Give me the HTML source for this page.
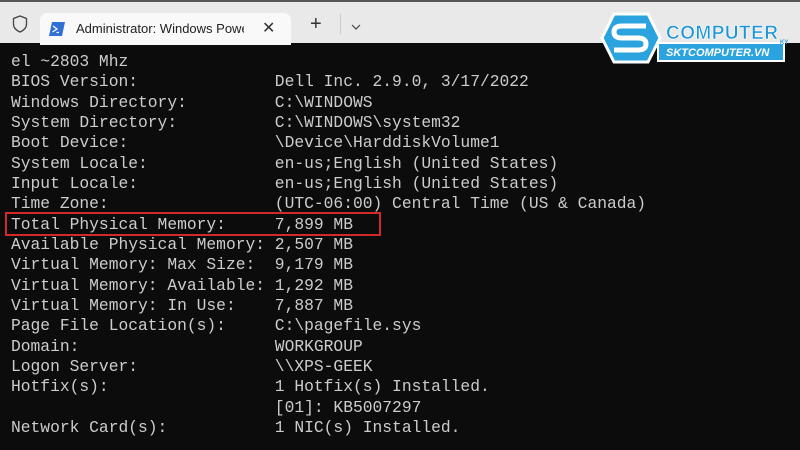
<!DOCTYPE html>
<html><head><style>
body{margin:0;width:800px;height:450px;overflow:hidden;background:#0c0c0c;position:relative;font-family:"Liberation Sans",sans-serif}
#bar{position:absolute;left:0;top:0;width:800px;height:43px;background:#e9e9e9;border-top:2px solid #555;box-sizing:border-box}
#tab{position:absolute;left:40px;top:11px;width:251px;height:32px;background:#f9f9f9;border-radius:7px 7px 0 0}
#term{position:absolute;left:11px;top:52px;margin:0;font-family:"Liberation Mono",monospace;font-size:16.3px;line-height:20.33px;color:#cccccc;white-space:pre}
#box{position:absolute;left:5px;top:212px;width:376px;height:24px;border:2px solid #d02a2a;box-sizing:border-box}
</style></head><body>
<div id="bar">
<svg style="position:absolute;left:12px;top:13px" width="16" height="18" viewBox="0 0 16 18"><path d="M8 1 L14.5 3.5 V9 C14.5 13 11.5 15.5 8 17 C4.5 15.5 1.5 13 1.5 9 V3.5 Z" fill="none" stroke="#444" stroke-width="1.3"/></svg>
<div id="tab">
<svg style="position:absolute;left:9px;top:9px" width="16" height="14" viewBox="0 0 16 14"><path d="M3 0 H16 L13 14 H0 Z" fill="#2f6fd6"/><path d="M4 4 L8 7 L3.5 10 M7.5 10.5 H10" stroke="#fff" stroke-width="1.2" fill="none"/></svg>
<div style="position:absolute;left:36px;top:8px;font-size:13px;color:#222;width:168px;overflow:hidden;white-space:nowrap">Administrator: Windows PowerShell</div>
<div style="position:absolute;left:222px;top:5px;font-size:16px;color:#333">✕</div>
</div>
<div style="position:absolute;left:310px;top:11px;font-size:20px;color:#333">+</div>
<div style="position:absolute;left:340px;top:12px;width:1px;height:20px;background:#ccc"></div>
<svg style="position:absolute;left:351px;top:22px" width="10" height="6"><path d="M1 1 L5 5 L9 1" stroke="#444" fill="none" stroke-width="1.2"/></svg>
</div>
<svg style="position:absolute;left:600px;top:10px" width="195" height="56" viewBox="0 0 195 56">
<path d="M14 4 H48 L60 28 L48 52 H14 L2 28 Z" fill="#2aa3de" stroke="#fff" stroke-width="3"/>
<path d="M46 16 H22 Q14 16 14 22 Q14 28 22 28 H38 Q46 28 46 34 Q46 40 38 40 H14" stroke="#fff" stroke-width="5" fill="none"/>
<rect x="58" y="33" width="126" height="18" fill="#2aa3de" stroke="#fff" stroke-width="2"/>
<text x="66" y="46" font-family="Liberation Sans" font-weight="bold" font-style="italic" font-size="11" fill="#fff">SKTCOMPUTER.VN</text>
<text x="66" y="29" font-family="Liberation Sans" font-weight="bold" font-size="19" fill="#1e96d6" stroke="#fff" stroke-width="0.6" textLength="112">COMPUTER</text>
<text x="180" y="34" font-family="Liberation Sans" font-weight="bold" font-size="6" fill="#2aa3de">KY</text>
</svg>
<pre id="term">el ~2803 Mhz
BIOS Version:              Dell Inc. 2.9.0, 3/17/2022
Windows Directory:         C:\WINDOWS
System Directory:          C:\WINDOWS\system32
Boot Device:               \Device\HarddiskVolume1
System Locale:             en-us;English (United States)
Input Locale:              en-us;English (United States)
Time Zone:                 (UTC-06:00) Central Time (US &amp; Canada)
Total Physical Memory:     7,899 MB
Available Physical Memory: 2,507 MB
Virtual Memory: Max Size:  9,179 MB
Virtual Memory: Available: 1,292 MB
Virtual Memory: In Use:    7,887 MB
Page File Location(s):     C:\pagefile.sys
Domain:                    WORKGROUP
Logon Server:              \\XPS-GEEK
Hotfix(s):                 1 Hotfix(s) Installed.
                           [01]: KB5007297
Network Card(s):           1 NIC(s) Installed.</pre>
<div id="box"></div>
</body></html>
